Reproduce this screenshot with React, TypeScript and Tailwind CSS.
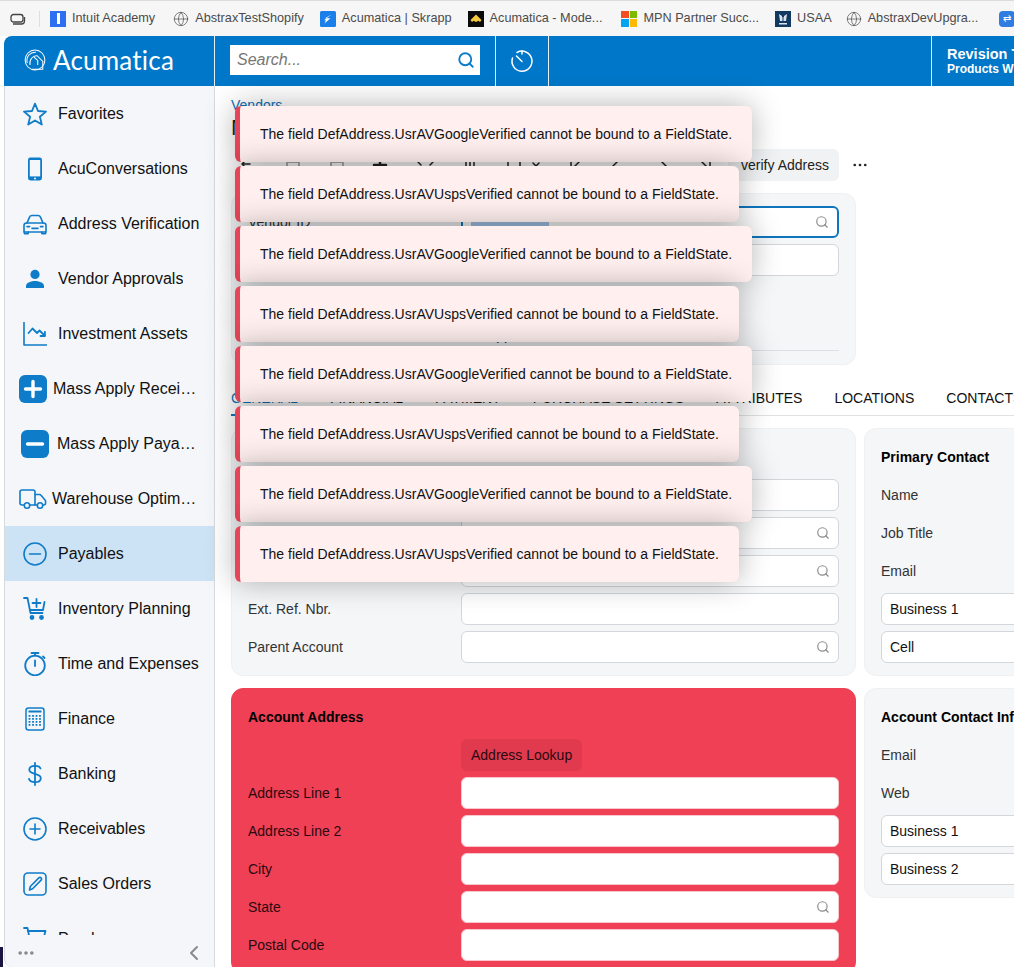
import React from 'react';
import { Search, Globe, Ellipsis, ChevronLeft } from 'lucide-react';

const BLUE = '#0f7cc9';

type IconProps = { className?: string };

const Outline = ({ children, className, box = '0 0 24 24' }: { children: React.ReactNode; className?: string; box?: string }) => (
  <svg viewBox={box} fill="none" stroke={BLUE} strokeWidth={1.6} strokeLinecap="round" strokeLinejoin="round" className={className}>
    {children}
  </svg>
);

const StarIcon = ({ className }: IconProps) => (
  <Outline className={className}><path d="M12 1.6l3 7.4 8 .6-6.1 5.2 1.9 7.8L12 18.4l-6.8 4.2 1.9-7.8L1 9.6l8-.6z" strokeWidth={1.8} /></Outline>
);
const PhoneIcon = ({ className }: IconProps) => (
  <svg viewBox="0 0 24 24" className={className}>
    <rect x="5" y="0.500" width="14" height="23" rx="2.400" fill={BLUE} />
    <rect x="6.800" y="3" width="10.400" height="16.400" fill="#f4f6f9" />
    <circle cx="12" cy="21.400" r="1" fill="#f4f6f9" />
  </svg>
);
const CarIcon = ({ className }: IconProps) => (
  <Outline className={className}>
    <path d="M4 11l2.400-5.600C7 4 7.800 3.500 9 3.500h6c1.200 0 2 .5 2.600 1.900L20 11" />
    <path d="M1 20v-6.500C1 12 2.200 11 3.600 11h16.800c1.400 0 2.600 1 2.600 2.500V20z" />
    <path d="M1.400 20v1.600h3.800V20M18.800 20v1.600h3.800V20" />
    <path d="M4 14.600h2.600M17.400 14.600H20M9 16.400h6" />
  </Outline>
);
const UserIcon = ({ className }: IconProps) => (
  <svg viewBox="0 0 24 24" fill={BLUE} className={className}>
    <circle cx="12" cy="7.400" r="4.600" />
    <path d="M3 21v-2.200c0-3.200 5.600-4.800 9-4.800s9 1.600 9 4.800V21z" />
  </svg>
);
const ChartIcon = ({ className }: IconProps) => (
  <Outline className={className}>
    <path d="M1 0.500V23h23" />
    <path d="M5.500 11l4-4.500 4.500 4.500 2.500-2.500 5 5" strokeWidth={1.800} />
    <path d="M17.500 14h4.400V9.800" strokeWidth={1.800} />
  </Outline>
);
const PlusBox = ({ className }: IconProps) => (
  <svg viewBox="0 0 28 28" className={className}>
    <rect width="28" height="28" rx="6" fill={BLUE} />
    <path d="M14 6.500v15M6.500 14h15" stroke="#fff" strokeWidth="3.400" strokeLinecap="round" />
  </svg>
);
const MinusBox = ({ className }: IconProps) => (
  <svg viewBox="0 0 28 28" className={className}>
    <rect width="28" height="28" rx="6" fill={BLUE} />
    <path d="M6.500 14h15" stroke="#fff" strokeWidth="3.400" strokeLinecap="round" />
  </svg>
);
const TruckIcon = ({ className }: IconProps) => (
  <Outline className={className} box="0 0 28 20">
    <path d="M5 16H3a2 2 0 0 1-2-2V3a2 2 0 0 1 2-2h11a2 2 0 0 1 2 2v13h-5" />
    <path d="M16 5.500h4.500c.6 0 1.100.3 1.500.8l4 4.600c.4.500.6 1 .6 1.500V14a2 2 0 0 1-2 2h-.6M16 16h2.500" />
    <circle cx="8" cy="16.500" r="2.700" />
    <circle cx="21" cy="16.500" r="2.700" />
  </Outline>
);
const CircleMinus = ({ className }: IconProps) => (
  <Outline className={className}><circle cx="12" cy="12" r="11" /><path d="M6.500 12h11" /></Outline>
);
const CirclePlus = ({ className }: IconProps) => (
  <Outline className={className}><circle cx="12" cy="12" r="11" /><path d="M7 12h10M12 7v10" /></Outline>
);
const CartPlusIcon = ({ className }: IconProps) => (
  <Outline className={className}>
    <path d="M1 1h3.500l3 15h12" strokeWidth={1.800} />
    <path d="M21.500 5l-1.500 8H7.200" strokeWidth={1.800} />
    <path d="M13.500 2v8M9.500 6h8" strokeWidth={1.800} />
    <circle cx="9" cy="20.500" r="1.600" fill={BLUE} />
    <circle cx="18.500" cy="20.500" r="1.600" fill={BLUE} />
  </Outline>
);
const CartIcon = ({ className }: IconProps) => (
  <Outline className={className}>
    <path d="M1 1h3.500l3 15h12" strokeWidth={1.800} />
    <path d="M5 4h17.500l-2.500 9H7.200" strokeWidth={1.800} />
    <circle cx="9" cy="20.500" r="1.600" fill={BLUE} />
    <circle cx="18.500" cy="20.500" r="1.600" fill={BLUE} />
  </Outline>
);
const StopwatchIcon = ({ className }: IconProps) => (
  <Outline className={className}>
    <circle cx="12" cy="13.500" r="9.800" strokeWidth={1.800} />
    <path d="M8.500 1h7M12 1v2.500M12 8.500v5.500M20 4.500l1.500 1.500" strokeWidth={1.800} />
  </Outline>
);
const CalcIcon = ({ className }: IconProps) => (
  <svg viewBox="0 0 20 24" className={className}>
    <rect x="1" y="1" width="18" height="22" rx="2.500" fill="none" stroke={BLUE} strokeWidth="1.500" />
    <rect x="3.500" y="3.500" width="13" height="2" fill={BLUE} />
    {[8, 11, 14, 17].map((y) =>
      [4.500, 8, 11.500, 15].map((x) => <rect key={`${x}-${y}`} x={x - 0.900} y={y} width="1.800" height="1.800" fill={BLUE} />),
    )}
  </svg>
);
const DollarIcon = ({ className }: IconProps) => (
  <Outline className={className}>
    <path d="M12 1v22" strokeWidth={1.800} />
    <path d="M17.500 6.500C17 4.500 15 3.800 12 3.800c-3.200 0-5.700 1.400-5.700 4 0 5.600 11.500 2.600 11.500 8.400 0 2.600-2.500 4-5.800 4-3.200 0-5.500-1-6-3.400" strokeWidth={1.800} />
  </Outline>
);
const PenIcon = ({ className }: IconProps) => (
  <Outline className={className}>
    <rect x="1" y="1" width="22" height="22" rx="4" />
    <path d="M6.500 18l.8-3.500 8.500-8.600c.7-.7 1.700-.7 2.300 0 .6.600.6 1.600 0 2.200l-8.500 8.700z" />
  </Outline>
);

const navItems = [
  { label: 'Favorites', Icon: StarIcon, row: 'pl-[18px] pr-[12px] gap-[11px]', icon: 'w-6 h-6' },
  { label: 'AcuConversations', Icon: PhoneIcon, row: 'pl-[18px] pr-[12px] gap-[11px]', icon: 'w-6 h-6' },
  { label: 'Address Verification', Icon: CarIcon, row: 'pl-[18px] pr-[12px] gap-[11px]', icon: 'w-6 h-6' },
  { label: 'Vendor Approvals', Icon: UserIcon, row: 'pl-[18px] pr-[12px] gap-[11px]', icon: 'w-6 h-6' },
  { label: 'Investment Assets', Icon: ChartIcon, row: 'pl-[18px] pr-[12px] gap-[11px]', icon: 'w-6 h-6' },
  { label: 'Mass Apply Receipts', Icon: PlusBox, row: 'pl-[14px] pr-[16px] gap-[6px]', icon: 'w-7 h-7' },
  { label: 'Mass Apply Payables', Icon: MinusBox, row: 'pl-[16px] pr-[18px] gap-2', icon: 'w-7 h-7' },
  { label: 'Warehouse Optimization', Icon: TruckIcon, row: 'pl-[14px] pr-[16px] gap-[5px]', icon: 'w-7 h-5' },
  { label: 'Payables', Icon: CircleMinus, row: 'pl-[18px] pr-[12px] gap-[11px] bg-[#cce3f6]', icon: 'w-6 h-6' },
  { label: 'Inventory Planning', Icon: CartPlusIcon, row: 'pl-[18px] pr-[12px] gap-[11px]', icon: 'w-6 h-6' },
  { label: 'Time and Expenses', Icon: StopwatchIcon, row: 'pl-[18px] pr-[12px] gap-[11px]', icon: 'w-6 h-6' },
  { label: 'Finance', Icon: CalcIcon, row: 'pl-[18px] pr-[12px] gap-[11px]', icon: 'w-6 h-6' },
  { label: 'Banking', Icon: DollarIcon, row: 'pl-[18px] pr-[12px] gap-[11px]', icon: 'w-6 h-6' },
  { label: 'Receivables', Icon: CirclePlus, row: 'pl-[18px] pr-[12px] gap-[11px]', icon: 'w-6 h-6' },
  { label: 'Sales Orders', Icon: PenIcon, row: 'pl-[18px] pr-[12px] gap-[11px]', icon: 'w-6 h-6' },
  { label: 'Purchases', Icon: CartIcon, row: 'pl-[18px] pr-[12px] gap-[11px]', icon: 'w-6 h-6' },
];

const toasts = ['Google', 'Usps', 'Google', 'Usps', 'Google', 'Usps', 'Google', 'Usps'];

const Bookmark = ({ icon, label, className }: { icon: React.ReactNode; label: string; className?: string }) => (
  <div className={`flex items-center gap-[6px] shrink-0 ${className ?? ''}`}>
    {icon}
    <span className="text-[12.7px] leading-none text-[#4b4b4b] whitespace-nowrap">{label}</span>
  </div>
);

const BookmarksBar = () => (
  <div className="h-9 bg-[#f6f6f6] border-t border-t-[#dcdcdc] flex items-center pl-[10px] overflow-hidden shrink-0">
    <svg viewBox="0 0 16 12" className="w-4 h-3 shrink-0" fill="none" stroke="#444" strokeWidth="1.300">
      <rect x="1" y="1.500" width="12" height="7.500" rx="2.500" />
      <path d="M3 11h8.500c1.500 0 3-1 3-3V4" />
    </svg>
    <div className="w-px h-4 bg-[#dedede] ml-[13px] mr-[10px] shrink-0" />
    <div className="flex items-center gap-4">
      <Bookmark
        label="Intuit Academy"
        icon={<div className="w-4 h-4 bg-[#2d6ff0] flex items-center justify-center"><div className="w-[3px] h-[11px] bg-white" /></div>}
      />
      <Bookmark className="ml-[2px]" label="AbstraxTestShopify" icon={<Globe size={16} strokeWidth={1} color="#444" />} />
      <Bookmark
        label="Acumatica | Skrapp"
        icon={
          <svg viewBox="0 0 16 16" className="w-4 h-4">
            <rect width="16" height="16" rx="1.500" fill="#1a7fe8" />
            <path d="M11.500 3.500L5 7.200h5.500L4.500 12.500l1.500-3.300H4z" fill="#fff" />
          </svg>
        }
      />
      <Bookmark
        label="Acumatica - Mode..."
        icon={
          <svg viewBox="0 0 16 16" className="w-4 h-4">
            <rect width="16" height="16" fill="#0b0b0b" />
            <path d="M8 3.500l5.500 5.500-1.500 2-1.500-1.200L8 11 5.500 9.800 4 11 2.500 9z" fill="#f5c93d" />
          </svg>
        }
      />
      <Bookmark
        className="ml-[3px]"
        label="MPN Partner Succ..."
        icon={
          <div className="grid grid-cols-2 gap-px w-4 h-4">
            <div className="bg-[#f25022]" />
            <div className="bg-[#7fba00]" />
            <div className="bg-[#00a4ef]" />
            <div className="bg-[#ffb900]" />
          </div>
        }
      />
      <Bookmark
        label="USAA"
        icon={
          <svg viewBox="0 0 16 16" className="w-4 h-4">
            <rect width="16" height="16" fill="#12395f" />
            <path d="M4 3l3 2v5H5zM12 3L9 5v5h2zM7.500 6h1v4h-1z" fill="#dbe4ec" />
            <rect x="4" y="12" width="8" height="1.500" fill="#dbe4ec" />
          </svg>
        }
      />
      <Bookmark className="ml-[-2px]" label="AbstraxDevUpgra..." icon={<Globe size={16} strokeWidth={1} color="#444" />} />
      <div className="w-4 h-4 rounded-[4px] bg-[#2f7de1] ml-[5px] shrink-0 flex items-center justify-center text-white text-[10px] leading-none">⇄</div>
    </div>
  </div>
);

const Header = () => (
  <div className="h-[50px] bg-[#0077c8] rounded-tl-lg flex items-stretch shrink-0 text-white">
    <div className="w-[211px] border-r border-white/90 flex items-center pl-5 gap-[7px] shrink-0 pb-[2px]">
      <svg viewBox="0 0 24 24" className="w-[22px] h-[22px]" fill="none" stroke="#fff" strokeWidth="1.100">
        <circle cx="12" cy="12" r="10.800" />
        <path d="M3.500 15.500C1.800 8 7 3 13 3.500" />
        <path d="M6.500 17.500c-1-6 3-10.500 8-10l6 6v8.500H9" />
        <path d="M11 9l4 3.500v5" />
      </svg>
      <span className="font-['Lato',sans-serif] text-[26px] leading-none tracking-[0.2px]">Acumatica</span>
    </div>
    <div className="w-[281px] border-r border-white/90 flex items-center pl-[15px] pb-[2px] shrink-0">
      <div className="w-[250px] h-[30px] bg-white flex items-center justify-between pl-[7px] pr-[5px]">
        <span className="italic text-base text-[#777]">Search...</span>
        <Search size={18} color={BLUE} strokeWidth={2.500} />
      </div>
    </div>
    <div className="w-[53px] border-r border-white/90 flex items-center justify-center shrink-0">
      <svg viewBox="0 0 24 24" className="w-[24px] h-[24px]" fill="none" stroke="#fff" strokeWidth="1.500" strokeLinecap="round">
        <path d="M7 3.500A10 10 0 1 1 2.500 9" />
        <path d="M6.500 7l5.500 5.500M12 2v3" />
      </svg>
    </div>
    <div className="w-[383px] border-r border-white/90 shrink-0" />
    <div className="pl-[15px] flex flex-col justify-center whitespace-nowrap font-semibold">
      <span className="text-[14.5px] leading-[16px]">Revision Two</span>
      <span className="text-xs leading-[15px]">Products Wholesale</span>
    </div>
  </div>
);

const Sidebar = () => (
  <div className="w-[211px] shrink-0 bg-[#f4f6f9] border-r border-l border-[#d6d9de] flex flex-col text-[#111] rounded-bl-lg">
    <div className="h-[849px] overflow-hidden">
      {navItems.map(({ label, Icon, row, icon }) => (
        <div key={label} className={`h-[55px] flex items-center ${row}`}>
          <Icon className={`${icon} shrink-0`} />
          <span className="text-base truncate">{label}</span>
        </div>
      ))}
    </div>
    <div className="flex-1 flex items-center justify-between pl-[11px] pr-[8px] pt-[4px] text-[#8a8a8a]">
      <Ellipsis size={20} strokeWidth={2.400} />
      <ChevronLeft size={24} strokeWidth={2} />
    </div>
  </div>
);

const Field = ({ search, value, tone }: { search?: boolean; value?: string; tone?: string }) => (
  <div className={`h-8 bg-white rounded-md border flex items-center justify-between px-2 text-sm text-[#111] ${tone ?? 'border-[#d3d6da]'}`}>
    <span>{value}</span>
    {search && <Search size={14} color="#8b8b8b" strokeWidth={2} />}
  </div>
);

const FormRow = ({ label, children, labelClass }: { label: string; children?: React.ReactNode; labelClass?: string }) => (
  <div className="h-8 flex items-center">
    <div className={`w-[213px] shrink-0 text-sm truncate ${labelClass ?? 'text-[#333]'}`}>{label}</div>
    {children && <div className="w-[378px] shrink-0">{children}</div>}
  </div>
);

const Panel = ({ title, children, tone }: { title: string; children: React.ReactNode; tone?: string }) => (
  <div className={`w-[625px] shrink-0 rounded-xl border px-4 py-3 flex flex-col gap-[6px] ${tone ?? 'bg-[#f4f6f8] border-[#eef0f2]'}`}>
    <div className="h-8 flex items-center text-sm font-bold text-black whitespace-nowrap">{title}</div>
    {children}
  </div>
);

const ToolbarGlyphs = () => (
  <svg viewBox="0 0 480 20" className="w-[480px] h-5 shrink-0" fill="none" stroke="#222" strokeWidth="1.500" strokeLinecap="round" strokeLinejoin="round">
    <path d="M10 9H2M6 5l-4 4 4 4" />
    <rect x="47" y="7" width="12" height="10" rx="1" stroke="#999" />
    <rect x="91" y="7" width="12" height="10" rx="1" stroke="#999" />
    <path d="M140 4v12M134 10h12" strokeWidth="2.500" />
    <path d="M178 7l3 3M193 7l-3 3M178 16l3-3M193 16l-3-3" />
    <path d="M226 6v10M230 6v10M234 6v10" />
    <path d="M268 6v10M280 6v10" />
    <path d="M293 8l6 6M299 8l-6 6" />
    <path d="M331 6v12M340 6l-6 6 6 6" />
    <path d="M378 6l-6 6 6 6" />
    <path d="M421 6l6 6-6 6" />
    <path d="M461 6l6 6-6 6M470 6v12" />
  </svg>
);

const Content = () => (
  <div className="flex-1 min-w-0 overflow-hidden pl-4 pt-[11px] text-[#222]">
    <div className="text-sm leading-4 text-[#0f70b7]">Vendors</div>
    <div className="text-[22px] leading-[26px] mt-[2px] text-[#222]">New Record</div>
    <div className="flex items-center h-8 mt-2 pl-[9px]">
      <ToolbarGlyphs />
      <div className="h-8 w-[111px] bg-[#f1f2f3] rounded-md ml-2 flex items-center justify-end pr-[10px] text-sm whitespace-nowrap">verify Address</div>
      <Ellipsis size={18} strokeWidth={1.600} className="ml-[12px]" />
    </div>

    <div className="w-[625px] h-[172px] mt-3 rounded-xl border border-[#eef0f2] bg-[#f4f6f8] px-4 pt-3 flex flex-col gap-[6px]">
      <FormRow label="Vendor ID">
        <div className="h-8 bg-white rounded-md border-2 border-[#0f76bd] flex items-center justify-between pl-2 pr-2">
          <div className="w-[78px] h-4 bg-[#a6c8ee]" />
          <Search size={14} color="#8b8b8b" strokeWidth={2} />
        </div>
      </FormRow>
      <FormRow label="Vendor Name"><Field /></FormRow>
      <div className="h-8 flex items-center mt-[37px] pl-[239px] text-sm whitespace-nowrap border-b border-[#dcdfe3]">Approved</div>
    </div>

    <div className="h-[35px] mt-4 border-b border-[#dfe2e5] flex items-center gap-8 text-sm whitespace-nowrap text-[#111]">
      <div className="h-[35px] flex items-center pt-[2px] border-b-2 border-[#0f76bd] text-[#0f70b7]">GENERAL</div>
      <span>FINANCIAL</span>
      <span>PAYMENT</span>
      <span>PURCHASE SETTINGS</span>
      <span>ATTRIBUTES</span>
      <span>LOCATIONS</span>
      <span>CONTACTS</span>
    </div>

    <div className="flex items-start gap-2 mt-3">
      <Panel title="Account Info">
        <FormRow label="Account Name"><Field /></FormRow>
        <FormRow label="Vendor Class"><Field search /></FormRow>
        <FormRow label="Status"><Field search /></FormRow>
        <FormRow label="Ext. Ref. Nbr."><Field /></FormRow>
        <FormRow label="Parent Account"><Field search /></FormRow>
      </Panel>
      <Panel title="Primary Contact">
        <FormRow label="Name" />
        <FormRow label="Job Title" />
        <FormRow label="Email" />
        <div className="w-[213px]"><Field value="Business 1" /></div>
        <div className="w-[213px]"><Field value="Cell" /></div>
      </Panel>
    </div>

    <div className="flex items-start gap-2 mt-3">
      <Panel title="Account Address" tone="bg-[#ef4056] border-[#ef4056]">
        <div className="h-8 pl-[213px]">
          <div className="w-fit h-8 px-[10px] rounded-md bg-[#e13a4f] flex items-center text-sm text-[#2a0a0e]">Address Lookup</div>
        </div>
        {['Address Line 1', 'Address Line 2', 'City', 'State', 'Postal Code'].map((label) => (
          <FormRow key={label} label={label} labelClass="text-[#2a0a0e]">
            <Field search={label === 'State'} tone="border-[#f8c6cd]" />
          </FormRow>
        ))}
      </Panel>
      <Panel title="Account Contact Info">
        <FormRow label="Email" />
        <FormRow label="Web" />
        <div className="w-[213px]"><Field value="Business 1" /></div>
        <div className="w-[213px]"><Field value="Business 2" /></div>
      </Panel>
    </div>
  </div>
);

const App = () => (
  <div className="relative w-[1014px] h-[967px] overflow-hidden bg-white font-['Liberation_Sans',Arial,sans-serif] flex flex-col">
    <BookmarksBar />
    <div className="flex-1 min-h-0 ml-1 flex flex-col">
      <Header />
      <div className="flex-1 min-h-0 flex">
        <Sidebar />
        <Content />
      </div>
    </div>
    <div className="absolute left-0 bottom-0 w-[3px] h-[20px] bg-[#1a1440]" />
    <div className="absolute left-[235px] top-[106px] flex flex-col items-start gap-1">
      {toasts.map((name, i) => (
        <div
          key={i}
          className="h-14 bg-[#ffefef] border-l-[5px] border-l-[#e64459] rounded-md pl-5 pr-5 flex items-center text-sm text-[#111] whitespace-nowrap shadow-[0_0_30px_rgba(0,0,0,0.3)]"
        >
          The field DefAddress.UsrAV{name}Verified cannot be bound to a FieldState.
        </div>
      ))}
    </div>
  </div>
);

export default App;
